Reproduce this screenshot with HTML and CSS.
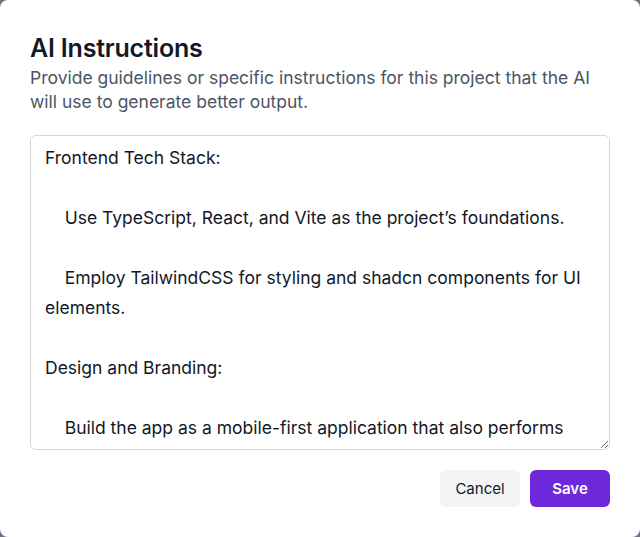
FILE: index.html
```html
<!DOCTYPE html>
<html lang="en">
<head>
<meta charset="utf-8">
<title>AI Instructions</title>
<link rel="stylesheet" href="styles.css">
</head>
<body>
<div class="dialog">
  <h2 class="title">AI Instructions</h2>
  <p class="desc">Provide guidelines or specific instructions for this project that the AI will use to generate better output.</p>
  <textarea class="editor">Frontend Tech Stack:

    Use TypeScript, React, and Vite as the project’s foundations.

    Employ TailwindCSS for styling and shadcn components for UI elements.

Design and Branding:

    Build the app as a mobile-first application that also performs well on desktop screens.

    Keep the interface clean and minimal with consistent spacing.</textarea>
  <div class="actions">
    <button class="btn btn-cancel">Cancel</button>
    <button class="btn btn-save">Save</button>
  </div>
</div>
</body>
</html>
```
FILE: styles.css
```css
* { box-sizing: border-box; }
html, body { height: 100%; }
body {
  margin: 0;
  background: #6b7280;
  font-family: Inter, "Noto Sans", sans-serif;
  overflow: hidden;
}
.dialog {
  width: 100vw;
  height: 100vh;
  background: #ffffff;
  border-radius: 8px;
  padding: 33px 30px 30px;
  display: flex;
  flex-direction: column;
}
.title {
  margin: 0;
  font-size: 25px;
  line-height: 30px;
  font-weight: 600;
  color: #111827;
  letter-spacing: -0.2px;
}
.desc {
  margin: 3px 0 0;
  font-size: 17.5px;
  line-height: 24px;
  color: #4b5563;
}
.editor {
  margin-top: 21px;
  flex: 1;
  width: 100%;
  border: 1px solid #d1d5db;
  border-radius: 6px;
  padding: 7px 14px;
  font-family: Inter, "Noto Sans", sans-serif;
  font-size: 17.5px;
  line-height: 30px;
  color: #111827;
  resize: vertical;
  outline: none;
  scrollbar-width: none;
}
.actions {
  margin-top: 20px;
  display: flex;
  justify-content: flex-end;
  gap: 10px;
}
.btn {
  width: 80px;
  height: 37px;
  border: none;
  border-radius: 6px;
  font-family: Inter, "Noto Sans", sans-serif;
  font-size: 15px;
  font-weight: 500;
  cursor: pointer;
}
.btn-cancel {
  background: #f3f4f6;
  color: #111827;
  font-weight: 400;
}
.btn-save {
  background: #6d28d9;
  color: #ffffff;
  font-weight: 600;
}
```
